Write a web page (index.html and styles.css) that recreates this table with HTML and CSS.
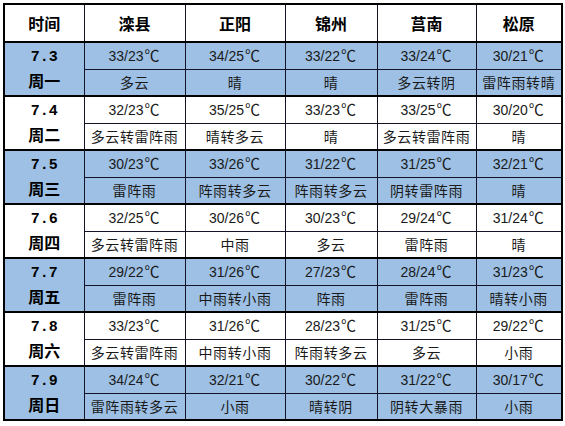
FILE: index.html
```html
<!DOCTYPE html>
<html lang="zh">
<head>
<meta charset="utf-8">
<link rel="stylesheet" href="styles.css">
</head>
<body>
<div class="wrap">
<table class="wx">
<colgroup>
<col class="c0"><col class="c1"><col class="c2"><col class="c3"><col class="c4"><col class="c5">
</colgroup>
<thead>
<tr class="head"><th>时间</th><th>滦县</th><th>正阳</th><th>锦州</th><th>莒南</th><th>松原</th></tr>
</thead>
<tbody>
<tr class="blue t"><td rowspan="2" class="day"><span class="d">7.3</span><span class="w">周一</span></td><td>33/23<span class="u">℃</span></td><td>34/25<span class="u">℃</span></td><td>33/22<span class="u">℃</span></td><td>33/24<span class="u">℃</span></td><td>30/21<span class="u">℃</span></td></tr>
<tr class="blue b"><td>多云</td><td>晴</td><td>晴</td><td>多云转阴</td><td>雷阵雨转晴</td></tr>

<tr class="white t"><td rowspan="2" class="day"><span class="d">7.4</span><span class="w">周二</span></td><td>32/23<span class="u">℃</span></td><td>35/25<span class="u">℃</span></td><td>33/23<span class="u">℃</span></td><td>33/25<span class="u">℃</span></td><td>30/20<span class="u">℃</span></td></tr>
<tr class="white b"><td>多云转雷阵雨</td><td>晴转多云</td><td>晴</td><td>多云转雷阵雨</td><td>晴</td></tr>

<tr class="blue t"><td rowspan="2" class="day"><span class="d">7.5</span><span class="w">周三</span></td><td>30/23<span class="u">℃</span></td><td>33/26<span class="u">℃</span></td><td>31/22<span class="u">℃</span></td><td>31/25<span class="u">℃</span></td><td>32/21<span class="u">℃</span></td></tr>
<tr class="blue b"><td>雷阵雨</td><td>阵雨转多云</td><td>阵雨转多云</td><td>阴转雷阵雨</td><td>晴</td></tr>

<tr class="white t"><td rowspan="2" class="day"><span class="d">7.6</span><span class="w">周四</span></td><td>32/25<span class="u">℃</span></td><td>30/26<span class="u">℃</span></td><td>30/23<span class="u">℃</span></td><td>29/24<span class="u">℃</span></td><td>31/24<span class="u">℃</span></td></tr>
<tr class="white b"><td>多云转雷阵雨</td><td>中雨</td><td>多云</td><td>雷阵雨</td><td>晴</td></tr>

<tr class="blue t"><td rowspan="2" class="day"><span class="d">7.7</span><span class="w">周五</span></td><td>29/22<span class="u">℃</span></td><td>31/26<span class="u">℃</span></td><td>27/23<span class="u">℃</span></td><td>28/24<span class="u">℃</span></td><td>31/23<span class="u">℃</span></td></tr>
<tr class="blue b"><td>雷阵雨</td><td>中雨转小雨</td><td>阵雨</td><td>雷阵雨</td><td>晴转小雨</td></tr>

<tr class="white t"><td rowspan="2" class="day"><span class="d">7.8</span><span class="w">周六</span></td><td>33/23<span class="u">℃</span></td><td>31/26<span class="u">℃</span></td><td>28/23<span class="u">℃</span></td><td>31/25<span class="u">℃</span></td><td>29/22<span class="u">℃</span></td></tr>
<tr class="white b"><td>多云转雷阵雨</td><td>中雨转小雨</td><td>阵雨转多云</td><td>多云</td><td>小雨</td></tr>

<tr class="blue t"><td rowspan="2" class="day"><span class="d">7.9</span><span class="w">周日</span></td><td>34/24<span class="u">℃</span></td><td>32/21<span class="u">℃</span></td><td>30/22<span class="u">℃</span></td><td>31/22<span class="u">℃</span></td><td>30/17<span class="u">℃</span></td></tr>
<tr class="blue b"><td>雷阵雨转多云</td><td>小雨</td><td>晴转阴</td><td>阴转大暴雨</td><td>小雨</td></tr>
</tbody>
</table>
</div>
</body>
</html>
```
FILE: styles.css
```css
html, body {
  margin: 0;
  padding: 0;
  background: #ffffff;
}
.wrap {
  padding: 3px 0 0 3px;
}
.wx {
  border-collapse: collapse;
  table-layout: fixed;
  width: 560px;
  border: 2px solid #000;
  font-family: "Liberation Sans", "Noto Sans CJK SC", sans-serif;
  color: #1a1a1a;
}
.c0 { width: 80px; }
.c1 { width: 101px; }
.c2 { width: 100px; }
.c3 { width: 92px; }
.c4 { width: 99px; }
.c5 { width: 86px; }
.wx th, .wx td {
  padding: 0;
  text-align: center;
  vertical-align: middle;
  border: 1px solid #141428;
  white-space: nowrap;
  overflow: hidden;
}
.head {
  height: 38px;
}
.head th {
  font-family: "Noto Sans CJK SC", sans-serif;
  font-weight: 700;
  font-size: 16px;
  color: #000;
  background: #fff;
}
.wx tr.t, .wx tr.b {
  height: 27px;
}
.wx td {
  font-size: 14px;
  line-height: 16px;
}
.u {
  font-family: "Noto Sans CJK SC", sans-serif;
  font-size: 15px;
  margin-left: 1px;
  letter-spacing: 1px;
}
.wx tr.b td {
  font-family: "Noto Sans CJK SC", sans-serif;
  letter-spacing: 0.6px;
}
.wx tr.t td {
  border-top: 2px solid #000;
}
.blue td {
  background: #9dc0e4;
}
.white td {
  background: #ffffff;
}
.wx td.day {
  border-top: 2px solid #000;
  border-bottom: 2px solid #000;
  line-height: 20px;
}
.day .d {
  display: block;
  font-family: "Liberation Mono", monospace;
  font-weight: 700;
  font-size: 15px;
  color: #000;
  margin-bottom: 2px;
}
.day .w {
  display: block;
  font-family: "Noto Sans CJK SC", sans-serif;
  font-weight: 700;
  font-size: 16px;
  color: #000;
}
```
